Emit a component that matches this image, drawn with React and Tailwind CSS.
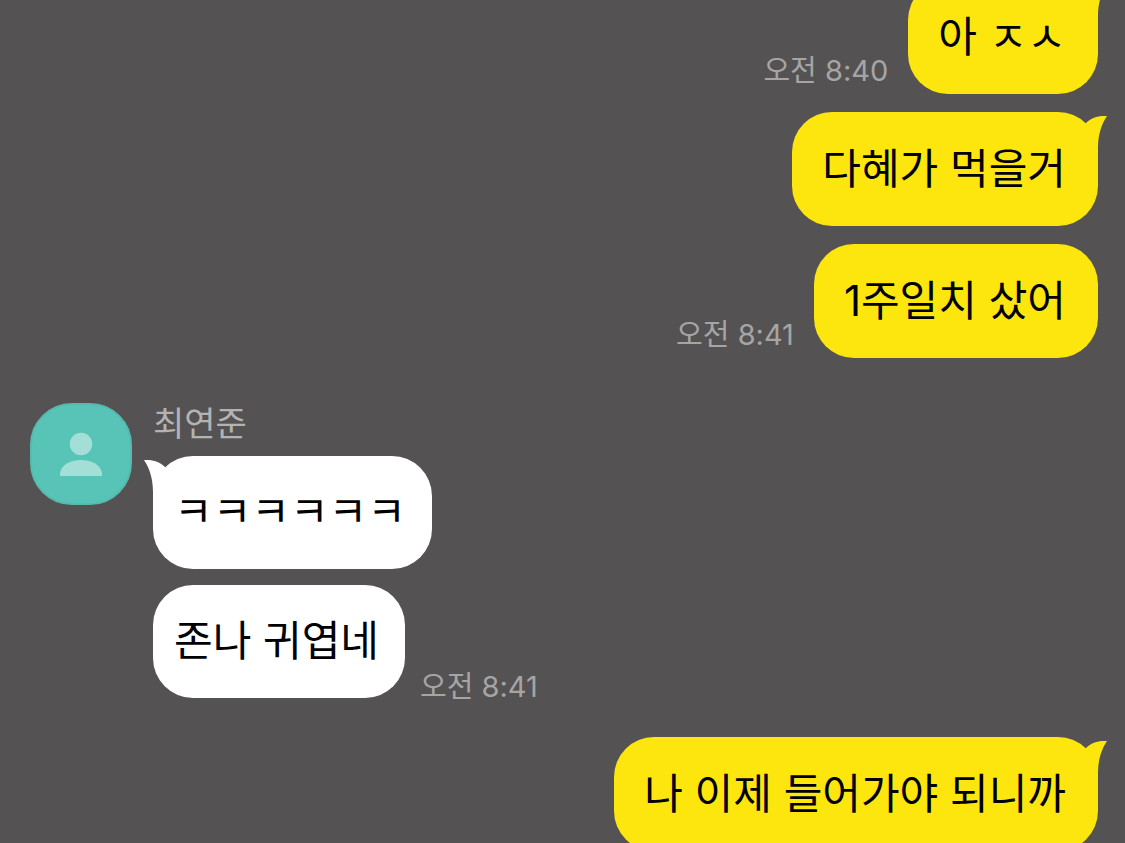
const messages = [
    {
        id: 1,
        mine: true,
        bubbles: [{ text: '아 ㅈㅅ', tail: true, time: '오전 8:40' }],
    },
    {
        id: 2,
        mine: true,
        bubbles: [
            { text: '다혜가 먹을거', tail: true },
            { text: '1주일치 샀어', time: '오전 8:41' },
        ],
    },
    {
        id: 3,
        sender: '최연준',
        bubbles: [
            { text: 'ㅋㅋㅋㅋㅋㅋ', tail: true },
            { text: '존나 귀엽네', time: '오전 8:41' },
        ],
    },
    {
        id: 4,
        mine: true,
        bubbles: [{ text: '나 이제 들어가야 되니까', tail: true }],
    },
];

// gap above each group, wider when the speaker changes
const groupSpacing = ['', 'mt-[18px]', 'mt-[45px]', 'mt-[39px]'];

const Tail = ({ className }) => (
    <svg width="32" height="44" viewBox="0 0 32 44" className={`absolute top-0 ${className}`} aria-hidden="true">
        <path d="M10.7 11.2C16.5 5.5 23 3.4 32 4C28 10 23 20 23 36V44H9Z" fill="currentColor" />
    </svg>
);

const Avatar = () => (
    <div className="h-[102px] w-[102px] shrink-0 rounded-[42px] border-2 border-[#54bbae] bg-[#57c4b7] flex items-center justify-center">
        <svg width="42" height="44" viewBox="0 0 42 44" fill="#a3dfd6" role="img" aria-label="프로필">
            <circle cx="21" cy="12" r="11.2" />
            <path d="M0 44V41.5C1 33 10 28 21 28S41 33 42 41.5V44Z" />
        </svg>
    </div>
);

const MyBubble = ({ text, tail, time }) => (
    <li className="flex items-end justify-end gap-5">
        {time && <time className="pb-[3px] text-[29px] leading-10 text-[#a6a5a5]">{time}</time>}
        <p className="relative rounded-[40px] bg-[#fde60d] py-[27px] pl-[30px] pr-8 text-[42px] leading-[60px] text-black">
            {tail && <Tail className="-right-[9px] text-[#fde60d]" />}
            {text}
        </p>
    </li>
);

const TheirBubble = ({ text, tail, time }) => (
    <li className="flex items-end gap-[15px]">
        <p className="relative rounded-[40px] bg-white pt-[26px] pb-[27px] pl-[21px] pr-[26px] text-[42px] leading-[60px] text-black">
            {tail && <Tail className="-left-[9px] -scale-x-100 text-white" />}
            {text}
        </p>
        {time && <time className="-mb-[9px] text-[29px] leading-10 text-[#a6a5a5]">{time}</time>}
    </li>
);

const MessageGroup = ({ group, className }) => {
    if (group.mine) {
        return (
            <ul className={`flex flex-col gap-[18px] ${className}`}>
                {group.bubbles.map((bubble) => (
                    <MyBubble key={bubble.text} {...bubble} />
                ))}
            </ul>
        );
    }

    return (
        <div className={`flex items-start gap-[21px] ${className}`}>
            <Avatar />
            <div className="min-w-0">
                <h2 className="mb-[11px] text-[34px] leading-[42px] text-[#b4b3b3]">{group.sender}</h2>
                <ul className="flex flex-col gap-4">
                    {group.bubbles.map((bubble) => (
                        <TheirBubble key={bubble.text} {...bubble} />
                    ))}
                </ul>
            </div>
        </div>
    );
};

export default function App() {
    return (
        <main className="h-screen overflow-hidden bg-[#545252] pl-[30px] pr-[27px] font-['Inter','Noto_Sans_CJK_KR',sans-serif] whitespace-nowrap">
            {/* Scrolled slightly past the first message */}
            <div className="-mt-5">
                {messages.map((group, i) => (
                    <MessageGroup key={group.id} group={group} className={groupSpacing[i]} />
                ))}
            </div>
        </main>
    );
}
